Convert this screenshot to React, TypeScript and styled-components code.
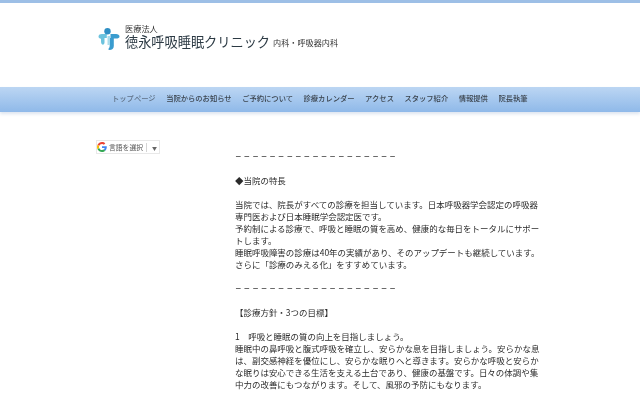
import React from "react";
import styled, { createGlobalStyle } from "styled-components";

const Global = createGlobalStyle`
  html, body { margin: 0; padding: 0; background: #fff; }
  body { width: 640px; height: 400px; overflow: hidden; font-family: "Noto Sans CJK JP", "Liberation Sans", sans-serif; }
`;

const Page = styled.div`
  width: 640px;
  height: 400px;
  overflow: hidden;
  background: #fff;
  border-top: 3px solid #9dbfe6;
  box-sizing: border-box;
  filter: blur(0.3px);
`;

const Header = styled.header`
  height: 84px;
  padding: 20px 0 0 98px;
  box-sizing: border-box;
  display: flex;
  align-items: flex-start;
  gap: 5px;
`;

const LogoText = styled.div`
  display: flex;
  flex-direction: column;
  color: #333;
`;

const Corp = styled.div`
  font-size: 8.2px;
  line-height: 10px;
  margin-bottom: 1px;
`;

const NameRow = styled.div`
  display: flex;
  align-items: flex-end;
  gap: 3px;
  white-space: nowrap;
  line-height: 16px;
`;

const ClinicName = styled.span`
  font-size: 13.2px;
  color: #2c3a44;
`;

const Dept = styled.span`
  font-size: 8.15px;
  line-height: 14px;
`;

const LogoMark = styled.svg`
  margin-top: 5px;
  flex: none;
`;

const Nav = styled.nav`
  height: 25px;
  padding: 0 0 2px 112px;
  box-sizing: border-box;
  display: flex;
  align-items: center;
  gap: 10.5px;
  background: linear-gradient(#bcd6f3, #8fb9e9);
  box-shadow: 0 2px 3px rgba(120, 150, 190, 0.25);
`;

const NavItem = styled.a<{ $current?: boolean }>`
  font-size: 7.3px;
  line-height: 23px;
  font-weight: 500;
  white-space: nowrap;
  color: ${(p) => (p.$current ? "#5f7186" : "#3a434d")};
`;

const Content = styled.div`
  display: flex;
  padding: 28px 0 0 96px;
`;

const Side = styled.aside`
  width: 139px;
  flex: none;
`;

const Translate = styled.div`
  width: 64px;
  height: 14px;
  box-sizing: border-box;
  border: 1px solid #e8e8e8;
  display: flex;
  align-items: center;
  gap: 2px;
  font-size: 6.8px;
  color: #555;
  white-space: nowrap;
`;

const Divider = styled.span`
  width: 1px;
  height: 9px;
  background: #d4d4d4;
  margin: 0 3px 0 1px;
`;

const Arrow = styled.span`
  font-size: 5px;
  color: #666;
`;

const Main = styled.main`
  width: 306px;
  flex: none;
  margin-top: 10px;
  font-size: 8.47px;
  line-height: 12px;
  color: #2b2b2b;
`;

const Line = styled.p`
  margin: 0;
`;

const DashLine = styled.p`
  margin: 0;
  font-size: 6.6px;
  font-weight: 700;
  letter-spacing: 1.98px;
  white-space: nowrap;
  color: #222;
`;

const Gap = styled.div`
  height: 12px;
`;

const Icon = () => (
  <LogoMark width="22" height="22" viewBox="0 0 22 22">
    <path d="M0.500 8.500C0.500 6.800 2 6 4 6h4.800v4H6.500v4.500C6.500 16 5.500 17 4.200 16.500 3 16 3 14 3 12V10.800C1.500 10.600 0.500 9.800 0.500 8.500Z" fill="#6cc3de" />
    <circle cx="9.500" cy="3.300" r="3.200" fill="#2f8fc4" />
    <path d="M12.500 6h5.500c2 0 3.500 1 3.500 2.400 0 1.400-1.500 2.200-3.500 2.200H15.800V18c0 2.500-1.800 4-4.300 4-1 0-1.500-.5-1-1.200.6-.8 1.200-1.500 1.200-3V10h.8V6Z" fill="#3a9ccf" />
    <path d="M9.500 8h2.500v9H9.500Z" fill="#a9dcec" />
  </LogoMark>
);

const GoogleG = () => (
  <svg width="10" height="10" viewBox="0 0 48 48">
    <path fill="#EA4335" d="M24 9.500c3.500 0 6.700 1.300 9.100 3.500l6.800-6.800C35.800 2.400 30.200 0 24 0 14.600 0 6.500 5.400 2.600 13.200l7.900 6.200C12.400 13.700 17.700 9.500 24 9.500z" />
    <path fill="#4285F4" d="M47 24.500c0-1.600-.1-3.100-.4-4.500H24v9h12.900c-.6 3-2.200 5.500-4.700 7.200l7.700 6C44.400 38 47 31.800 47 24.500z" />
    <path fill="#FBBC05" d="M10.500 28.600c-.5-1.400-.8-3-.8-4.600s.3-3.200.8-4.600l-7.900-6.200C.9 16.500 0 20.100 0 24s.9 7.500 2.600 10.800l7.900-6.200z" />
    <path fill="#34A853" d="M24 48c6.500 0 11.900-2.100 15.900-5.800l-7.700-6c-2.200 1.400-4.900 2.300-8.200 2.300-6.300 0-11.600-4.200-13.500-9.900l-7.900 6.200C6.500 42.600 14.600 48 24 48z" />
  </svg>
);

const navItems = ["当院からのお知らせ", "ご予約について", "診療カレンダー", "アクセス", "スタッフ紹介", "情報提供", "院長執筆"];
const dashes = "－".repeat(19);

export default function App() {
  return (
    <Page>
      <Global />
      <Header>
        <Icon />
        <LogoText>
          <Corp>医療法人</Corp>
          <NameRow>
            <ClinicName>徳永呼吸睡眠クリニック</ClinicName>
            <Dept>内科・呼吸器内科</Dept>
          </NameRow>
        </LogoText>
      </Header>
      <Nav>
        <NavItem $current>トップページ</NavItem>
        {navItems.map((n) => (
          <NavItem key={n}>{n}</NavItem>
        ))}
      </Nav>
      <Content>
        <Side>
          <Translate>
            <GoogleG />
            <span>言語を選択</span>
            <Divider />
            <Arrow>▼</Arrow>
          </Translate>
        </Side>
        <Main>
          <DashLine>{dashes}</DashLine>
          <Gap />
          <Line>◆当院の特長</Line>
          <Gap />
          <Line>当院では、院長がすべての診療を担当しています。日本呼吸器学会認定の呼吸器専門医および日本睡眠学会認定医です。</Line>
          <Line>予約制による診療で、呼吸と睡眠の質を高め、健康的な毎日をトータルにサポートします。</Line>
          <Line>睡眠呼吸障害の診療は40年の実績があり、そのアップデートも継続しています。</Line>
          <Line>さらに「診療のみえる化」をすすめています。</Line>
          <Gap />
          <DashLine>{dashes}</DashLine>
          <Gap />
          <Line>【診療方針・3つの目標】</Line>
          <Gap />
          <Line>1　呼吸と睡眠の質の向上を目指しましょう。</Line>
          <Line>睡眠中の鼻呼吸と腹式呼吸を確立し、安らかな息を目指しましょう。安らかな息は、副交感神経を優位にし、安らかな眠りへと導きます。安らかな呼吸と安らかな眠りは安心できる生活を支える土台であり、健康の基盤です。日々の体調や集中力の改善にもつながります。そして、風邪の予防にもなります。</Line>
        </Main>
      </Content>
    </Page>
  );
}
